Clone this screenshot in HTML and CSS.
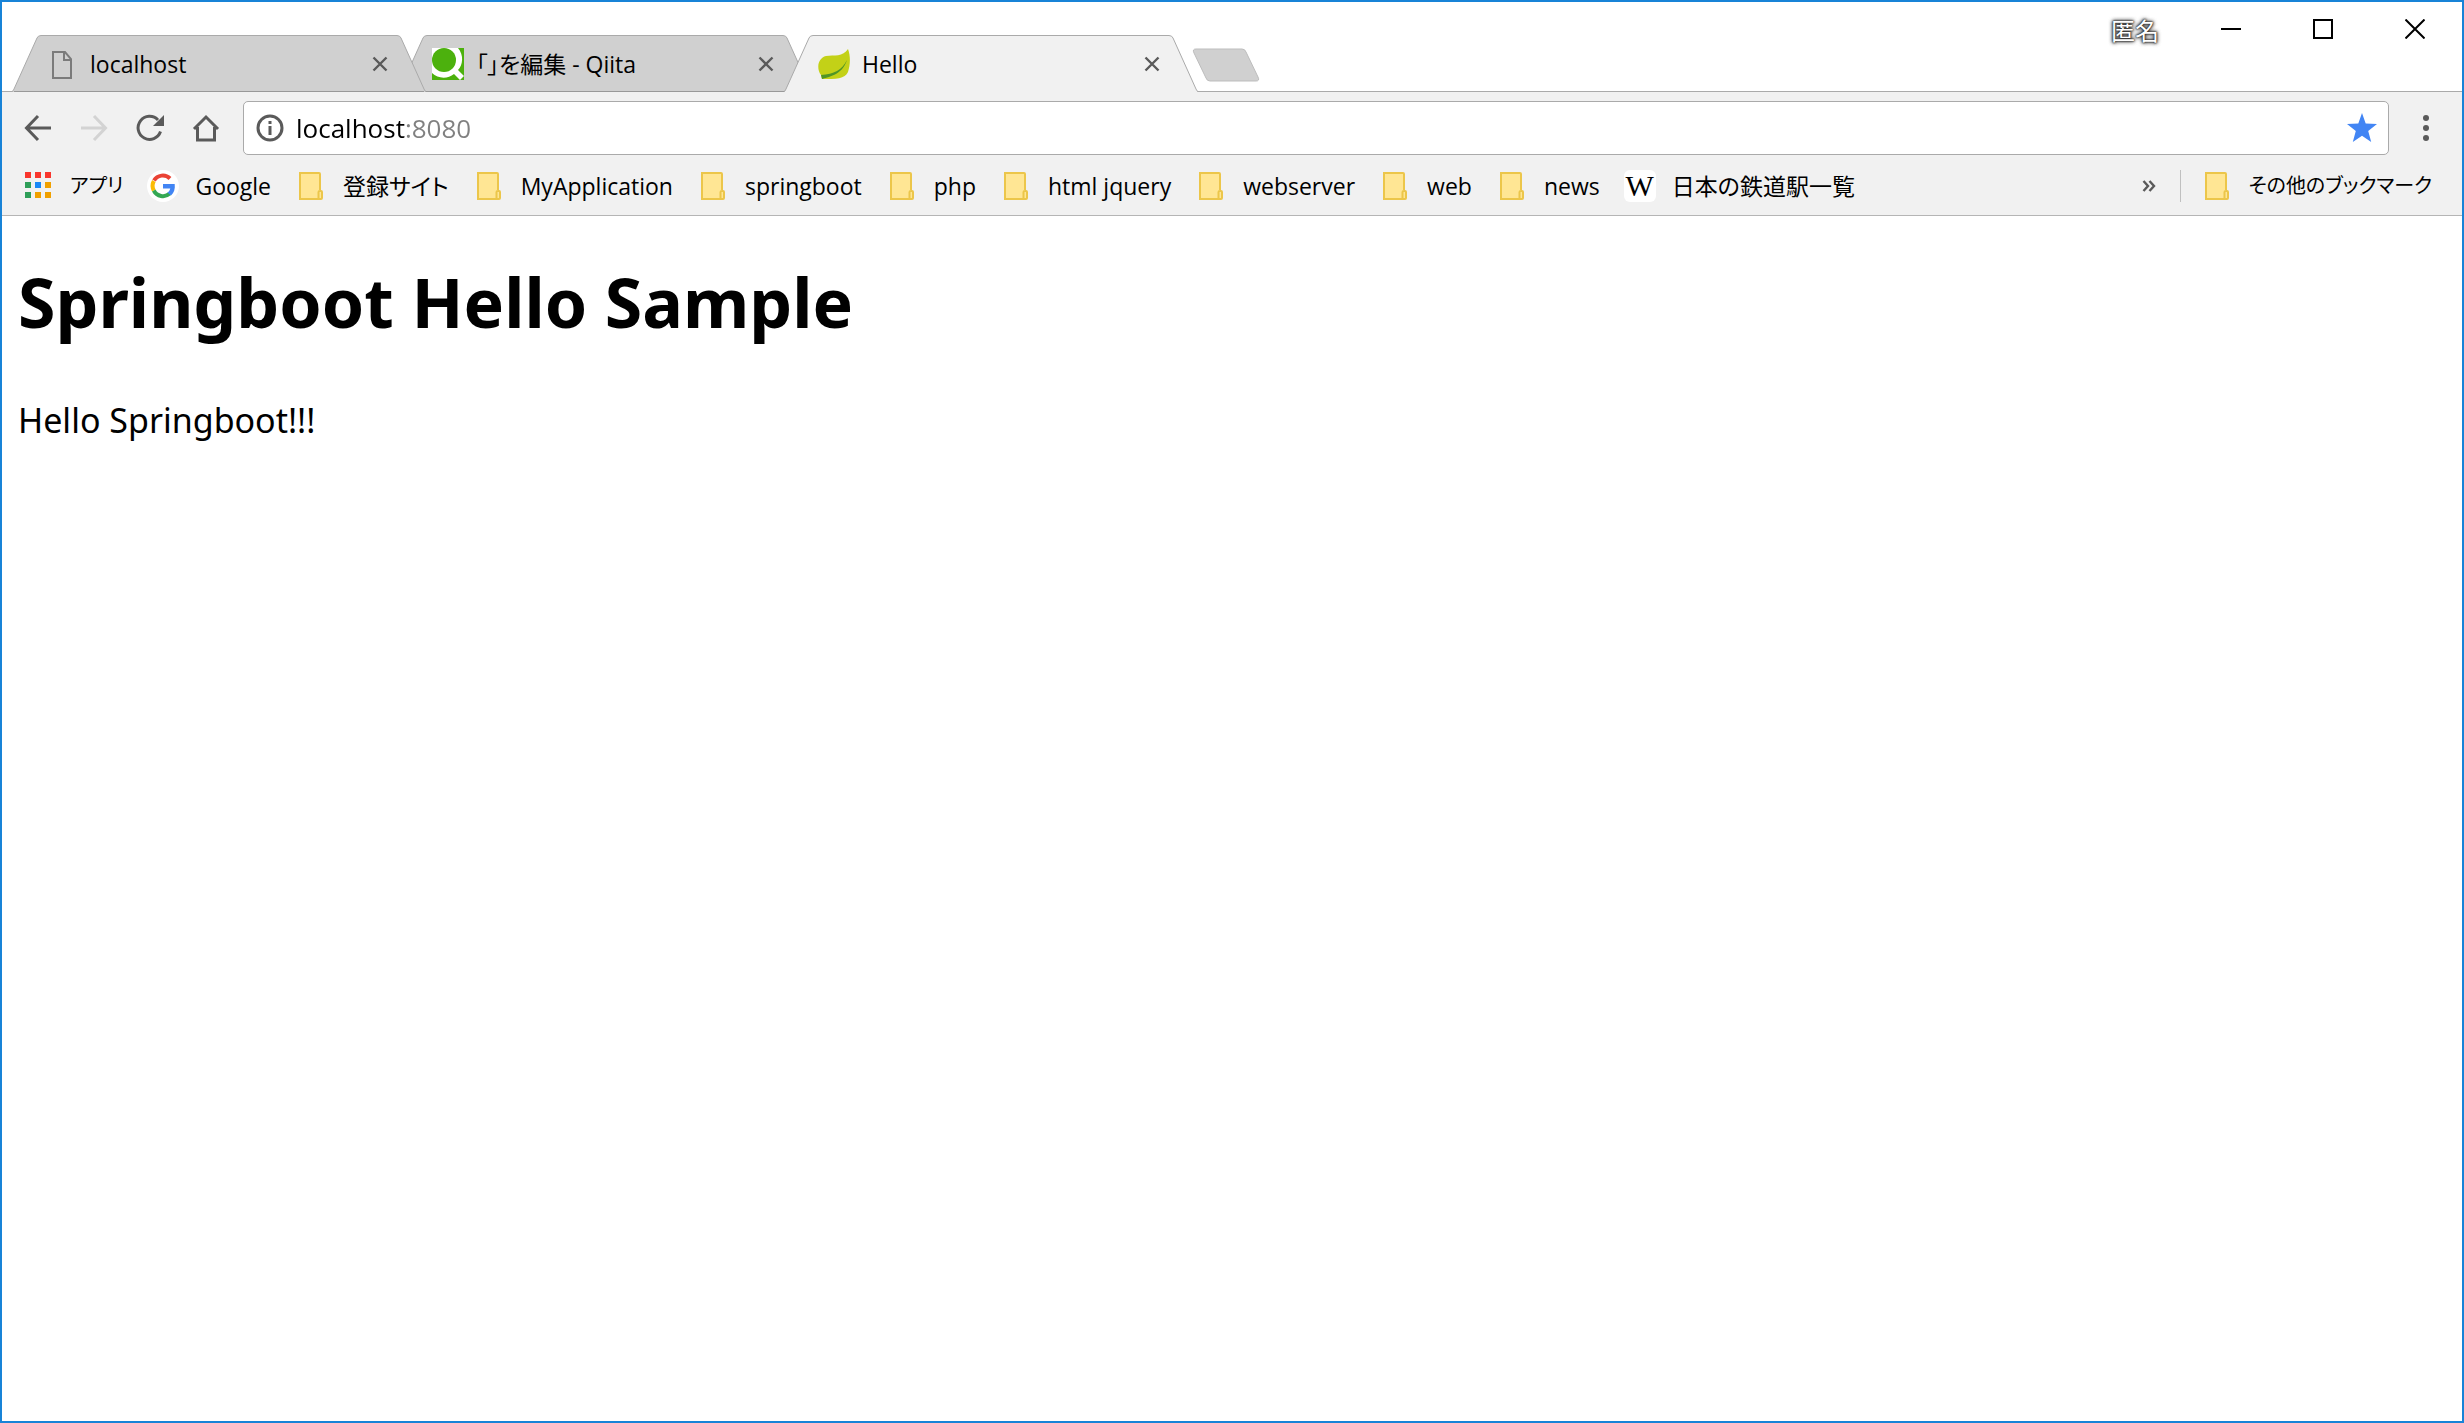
FILE: index.html
```html
<!DOCTYPE html>
<html lang="ja">
<head>
    <meta charset="UTF-8">
    <meta name="viewport" content="width=device-width, initial-scale=1.0">
    <title>Hello</title>
    <link rel="stylesheet" href="styles.css">
</head>
<body>
    <!-- shared shapes -->
    <svg class="defs" aria-hidden="true">
        <symbol id="tab-shape" viewBox="0 0 414 57">
            <path class="tab-fill" d="M0 57 Q1 57 2 54 L25 3 Q26 .5 29 .5 H385 Q388 .5 389 3 L412 54 Q413 57 414 57 Z"/>
            <path class="tab-base" d="M2 56.5 H412"/>
            <path class="tab-line" d="M0 56.5 Q1 56.5 2 54 L25 3 Q26 .5 29 .5 H385 Q388 .5 389 3 L412 54 Q413 56.5 414 56.5"/>
        </symbol>
        <symbol id="cross" viewBox="0 0 16 16">
            <path d="M1.5 1.5 L14.5 14.5 M14.5 1.5 L1.5 14.5" fill="none" stroke="#5a5a5a" stroke-width="2.4"/>
        </symbol>
        <symbol id="folder" viewBox="0 0 32 32">
            <path d="M5 3 H24.5 V21 L27 22.5 V29 H5 Z" fill="#ffe694"/>
            <path d="M25 20 V4 Q25 3 24 3 H5 V29 H26 Q27 29 27 28 V22 Q27 21 26 21 H25 Q23.500 21 23.500 22 V29" fill="none" stroke="#ecc64a" stroke-width="2"/>
        </symbol>
    </svg>

    <div class="window">
        <header class="titlebar">
            <nav class="tabs" aria-label="タブ">
                <div class="tab tab-first">
                    <svg class="tab-bg" aria-hidden="true"><use href="#tab-shape"/></svg>
                    <a class="tab-link" href="#">
                        <svg class="icon" viewBox="0 0 32 32" aria-hidden="true">
                            <path d="M7 4 H19 L25 11 V30 H7 Z M18 4 V12 H25" fill="none" stroke="#7b7b7b" stroke-width="2"/>
                        </svg>
                        <span>localhost</span>
                    </a>
                    <button class="tab-close" type="button" aria-label="閉じる"><svg aria-hidden="true"><use href="#cross"/></svg></button>
                </div>
                <div class="tab">
                    <svg class="tab-bg" aria-hidden="true"><use href="#tab-shape"/></svg>
                    <a class="tab-link" href="#">
                        <svg class="icon" viewBox="0 0 32 32" aria-hidden="true">
                            <rect width="32" height="32" fill="#4cb10d"/>
                            <path d="M0 0 H26 C32 7 31 17 26 22 L32 28 L28 32 L22 26 C16 31 6 31 0 25 Z" fill="#fff"/>
                            <circle cx="12" cy="12" r="12" fill="#4cb10d"/>
                        </svg>
                        <span>「」を編集 - Qiita</span>
                    </a>
                    <button class="tab-close" type="button" aria-label="閉じる"><svg aria-hidden="true"><use href="#cross"/></svg></button>
                </div>
                <div class="tab tab-active">
                    <svg class="tab-bg" aria-hidden="true"><use href="#tab-shape"/></svg>
                    <a class="tab-link" href="#" aria-current="page">
                        <svg class="icon" viewBox="0 0 32 32" aria-hidden="true">
                            <path d="M30 1 C33 9 32 18 30 24 C27 31 18 31 4 31 L3 27 C-2 20 0 10 8 8 C16 7 25 9 30 1 Z" fill="#c3d117"/>
                            <path d="M29 12 C24 22 16 26 3 27 L4 31 C9 29 24 28 29 12 Z" fill="#4f9526"/>
                        </svg>
                        <span>Hello</span>
                    </a>
                    <button class="tab-close" type="button" aria-label="閉じる"><svg aria-hidden="true"><use href="#cross"/></svg></button>
                </div>
                <button class="new-tab" type="button" aria-label="新しいタブ">
                    <svg viewBox="0 0 68 34" aria-hidden="true">
                        <path d="M4 1 H50 Q53 1 54 4 L66 29 Q68 33 64 33 H18 Q15 33 14 30 L2 5 Q0 1 4 1 Z" fill="#d0d0d0" stroke="#bdbdbd"/>
                    </svg>
                </button>
            </nav>
            <span class="profile">匿名</span>
            <div class="controls">
                <button class="control" type="button" aria-label="最小化"><svg viewBox="0 0 20 20" aria-hidden="true"><path d="M0 10 H20"/></svg></button>
                <button class="control" type="button" aria-label="最大化"><svg viewBox="0 0 20 20" aria-hidden="true"><path d="M1 1 H19 V19 H1 Z"/></svg></button>
                <button class="control" type="button" aria-label="閉じる"><svg viewBox="0 0 20 20" aria-hidden="true"><path d="M.5 .5 L19.500 19.500 M19.500 .5 L.5 19.500"/></svg></button>
            </div>
        </header>

        <div class="toolbar">
            <button class="tool" type="button" aria-label="戻る">
                <svg class="icon" viewBox="0 0 32 32" aria-hidden="true"><path d="M29 16 H5 M16 4 L4.500 16 L16 28"/></svg>
            </button>
            <button class="tool" type="button" aria-label="進む" disabled>
                <svg class="icon" viewBox="0 0 32 32" aria-hidden="true"><path d="M3 16 H27 M16 4 L27.500 16 L16 28"/></svg>
            </button>
            <button class="tool" type="button" aria-label="再読み込み">
                <svg class="icon" viewBox="0 0 32 32" aria-hidden="true">
                    <path d="M26.500 19.500 A11.500 11.500 0 1 1 24 8"/>
                    <path class="solid" d="M30 3 V14 H19 Z"/>
                </svg>
            </button>
            <button class="tool" type="button" aria-label="ホーム">
                <svg class="icon" viewBox="0 0 32 32" aria-hidden="true"><path d="M4 17 L16 5 L28 17 M7.500 15 V28 H24.500 V15"/></svg>
            </button>
            <div class="omnibox">
                <svg class="icon" viewBox="0 0 32 32" aria-hidden="true">
                    <circle cx="16" cy="16" r="12" fill="none" stroke="#5a5a5a" stroke-width="3"/>
                    <path d="M14.500 9 H17.500 V12 H14.500 Z M14.500 14 H17.500 V23 H14.500 Z" fill="#5a5a5a"/>
                </svg>
                <input class="address" type="text" value="localhost:8080" aria-label="アドレス" spellcheck="false">
                <button class="star" type="button" aria-label="ブックマーク">
                    <svg class="icon" viewBox="0 0 32 32" aria-hidden="true">
                        <path d="M16 1 L19.700 11.500 L31 12 L22.200 19 L25.200 30 L16 23.700 L6.800 30 L9.800 19 L1 12 L12.300 11.500 Z" fill="#4285f4"/>
                    </svg>
                </button>
            </div>
            <button class="menu" type="button" aria-label="メニュー">
                <svg class="icon" viewBox="0 0 32 32" aria-hidden="true"><circle cx="16" cy="6" r="3"/><circle cx="16" cy="16" r="3"/><circle cx="16" cy="26" r="3"/></svg>
            </button>
        </div>

        <nav class="bookmarks" aria-label="ブックマーク バー">
            <a class="bookmark kana" href="#">
                <svg class="icon" viewBox="0 0 32 32" aria-hidden="true">
                    <path d="M3 2h6v6H3z M13 2h6v6h-6z M23 2h6v6h-6z" fill="#f9362d"/>
                    <path d="M3 12h6v6H3z M3 22h6v6H3z" fill="#2e9e58"/>
                    <path d="M13 12h6v6h-6z" fill="#1a88f7"/>
                    <path d="M23 12h6v6h-6z M13 22h6v6h-6z M23 22h6v6h-6z" fill="#f0a000"/>
                </svg>
                <span>アプリ</span>
            </a>
            <a class="bookmark" href="#">
                <svg class="icon" viewBox="0 0 32 32" aria-hidden="true">
                    <circle cx="16" cy="16" r="16" fill="#fff"/>
                    <path d="M7 10.500 A10.300 10.300 0 0 1 23 8.500" fill="none" stroke="#ea4335" stroke-width="4"/>
                    <path d="M6.800 20.500 A10.300 10.300 0 0 1 6.800 11" fill="none" stroke="#fbbc05" stroke-width="4"/>
                    <path d="M6.800 20.500 A10.300 10.300 0 0 0 22.800 23.600" fill="none" stroke="#34a853" stroke-width="4"/>
                    <path d="M16 14 H27.700 C28.300 19 27 23 24 25.500 L20.500 22.500 C22 21.500 23 20 23.300 18.500 H16 Z" fill="#4285f4"/>
                </svg>
                <span>Google</span>
            </a>
            <a class="bookmark" href="#"><svg class="icon" aria-hidden="true"><use href="#folder"/></svg><span>登録サイト</span></a>
            <a class="bookmark" href="#"><svg class="icon" aria-hidden="true"><use href="#folder"/></svg><span>MyApplication</span></a>
            <a class="bookmark" href="#"><svg class="icon" aria-hidden="true"><use href="#folder"/></svg><span>springboot</span></a>
            <a class="bookmark" href="#"><svg class="icon" aria-hidden="true"><use href="#folder"/></svg><span>php</span></a>
            <a class="bookmark" href="#"><svg class="icon" aria-hidden="true"><use href="#folder"/></svg><span>html jquery</span></a>
            <a class="bookmark" href="#"><svg class="icon" aria-hidden="true"><use href="#folder"/></svg><span>webserver</span></a>
            <a class="bookmark" href="#"><svg class="icon" aria-hidden="true"><use href="#folder"/></svg><span>web</span></a>
            <a class="bookmark" href="#"><svg class="icon" aria-hidden="true"><use href="#folder"/></svg><span>news</span></a>
            <a class="bookmark" href="#">
                <span class="wiki" aria-hidden="true">W</span>
                <span>日本の鉄道駅一覧</span>
            </a>
            <button class="more" type="button" aria-label="その他">
                <svg viewBox="0 0 14 12" aria-hidden="true"><path d="M1.500 1 L6 6 L1.500 11 M7.500 1 L12 6 L7.500 11" fill="none" stroke="#5a5a5a" stroke-width="2.4"/></svg>
            </button>
            <a class="bookmark kana others" href="#"><svg class="icon" aria-hidden="true"><use href="#folder"/></svg><span>その他のブックマーク</span></a>
        </nav>

        <main class="page">
            <h1>Springboot Hello Sample</h1>
            <p>Hello Springboot!!!</p>
        </main>
    </div>
</body>
</html>
```
FILE: styles.css
```css
* {
    box-sizing: border-box;
}

body {
    margin: 0;
    background-color: #fff;
    color: #000;
    font-family: "Open Sans", "Noto Sans CJK JP", sans-serif;
    font-size: 23px;
}

button {
    display: flex;
    align-items: center;
    justify-content: center;
    flex: none;
    margin: 0;
    padding: 0;
    border: 0;
    background: none;
}

a {
    color: inherit;
    text-decoration: none;
}

.defs {
    display: none;
}

.icon {
    display: block;
    flex: none;
    width: 32px;
    height: 32px;
}

.window {
    display: flex;
    flex-direction: column;
    min-height: 100vh;
    border: 2px solid #1883d7;
}

/* tab strip */
.titlebar {
    display: flex;
    align-items: flex-start;
    height: 90px;
    border-bottom: 1px solid #aaa;
}

.tabs {
    display: flex;
    flex: 1;
    padding: 33px 0 0 10px;
}

.tab {
    position: relative;
    display: flex;
    align-items: center;
    width: 414px;
    height: 57px;
    margin-right: -28px;
    padding: 0 36px 0 34px;
    font-feature-settings: "palt";
    line-height: 32px;
}

.tab-first {
    z-index: 1;
}

.tab-active {
    z-index: 2;
    margin-right: 0;
}

.tab-bg {
    --base: #999;
    position: absolute;
    inset: 0;
    width: 100%;
    height: 100%;
    fill: #d0d0d0;
    stroke: #aaa;
}

.tab-active .tab-bg {
    --base: none;
    fill: #f1f1f1;
}

.tab-fill {
    stroke: none;
}

.tab-base {
    stroke: var(--base);
}

.tab-line {
    fill: none;
}

.tab-link {
    position: relative;
    display: flex;
    align-items: center;
    flex: 1;
    gap: 12px;
}

.tab-close {
    position: relative;
    width: 20px;
    height: 20px;
}

.tab-close svg {
    width: 16px;
    height: 16px;
}

.new-tab {
    height: 34px;
    margin: 13px 0 0 -6px;
}

.new-tab svg {
    width: 68px;
    height: 34px;
}

.profile {
    margin: 11px 26px 0 0;
    color: #fff;
    font-size: 24px;
    line-height: 36px;
    text-shadow: 0 0 2px #222, 0 0 2px #222, 0 0 4px #444, 0 0 4px #444;
}

.controls {
    display: flex;
    padding-right: 1px;
}

.control {
    width: 92px;
    height: 54px;
}

.control svg {
    width: 20px;
    height: 20px;
    fill: none;
    stroke: #000;
    stroke-width: 2;
}

/* toolbar */
.toolbar {
    display: flex;
    align-items: center;
    padding: 9px 18px 6px 8px;
    background-color: #f1f1f1;
}

.tool {
    width: 56px;
    height: 54px;
}

.tool .icon {
    fill: none;
    stroke: #5a5a5a;
    stroke-width: 3;
}

.tool:disabled .icon {
    stroke: #d3d3d3;
}

.tool .solid {
    fill: #5a5a5a;
    stroke: none;
}

.omnibox {
    display: flex;
    align-items: center;
    flex: 1;
    height: 54px;
    margin-left: 9px;
    padding: 0 10px;
    border: 1px solid #aaa;
    border-radius: 5px;
    background-color: #fff;
}

.address {
    flex: 1;
    min-width: 0;
    margin: 0;
    padding: 0 0 0 10px;
    border: 0;
    outline: 0;
    /* host in black, port in grey */
    background: linear-gradient(to right, #000 121px, #808080 121px);
    -webkit-background-clip: text;
    background-clip: text;
    color: transparent;
    font: inherit;
    font-size: 26px;
    line-height: 40px;
}

.menu {
    width: 36px;
    height: 54px;
    margin-left: 19px;
}

.menu .icon {
    fill: #5a5a5a;
}

/* bookmarks bar */
.bookmarks {
    display: flex;
    align-items: center;
    gap: 24px;
    height: 55px;
    padding: 0 30px 4px 20px;
    border-bottom: 1px solid #b5b5b5;
    background-color: #f1f1f1;
    font-feature-settings: "palt";
    white-space: nowrap;
}

.bookmark {
    display: flex;
    align-items: center;
    gap: 16px;
    line-height: 32px;
}

.kana {
    font-size: 20px;
}

.wiki {
    width: 32px;
    height: 32px;
    border-radius: 6px;
    background-color: #fff;
    font-family: "Liberation Serif", serif;
    font-size: 30px;
    text-align: center;
}

.more {
    width: 14px;
    height: 32px;
    margin-left: auto;
}

.more svg {
    width: 14px;
    height: 12px;
}

.others {
    padding-left: 20px;
    border-left: 1px solid #c0c0c0;
}

/* page content */
.page {
    flex: 1;
    padding: 0 16px;
    font-family: "Noto Sans", sans-serif;
    font-size: 34px;
}

h1 {
    margin: 38px 0;
    font-size: 68px;
    line-height: 96px;
}

p {
    margin: 46px 0;
    line-height: 48px;
}
```
